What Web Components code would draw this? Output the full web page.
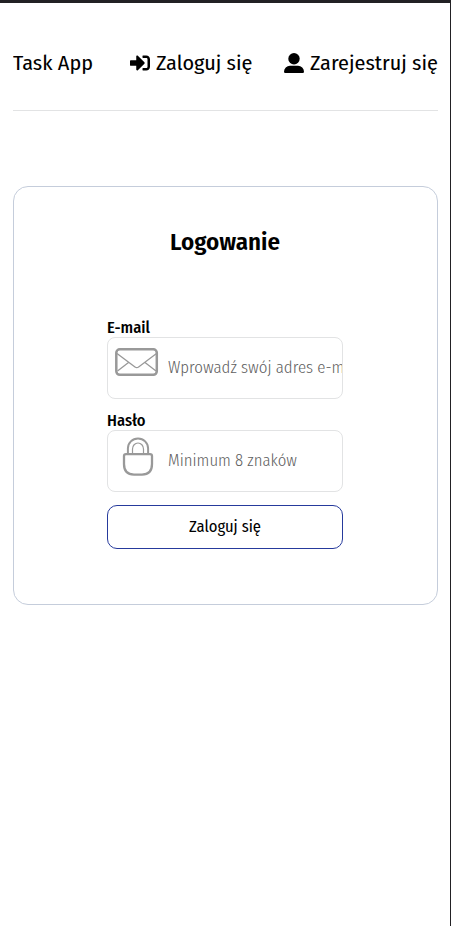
<!DOCTYPE html>
<html lang="pl">
<head>
<meta charset="utf-8">
<title>Task App</title>
<style>
html,body{height:100%}
body{margin:0;background:#fff;color:#000;font-family:"Fira Sans Condensed","Open Sans","Noto Sans",sans-serif}
</style>
</head>
<body>
<task-app></task-app>
<script>
const define = (name, html, init) => customElements.define(name, class extends HTMLElement {
  constructor(){
    super();
    this.attachShadow({mode:'open'}).innerHTML = html;
  }
  connectedCallback(){ if(init) init(this, this.shadowRoot); }
});

// Condenses a line of text to the width given in its attribute.
define('fit-text', `<style>
:host{display:block;flex:none;white-space:nowrap;text-align:left}
span{display:inline-block;transform-origin:0 50%}
</style><span><slot></slot></span>`, (el, root) => {
  const w = +el.getAttribute('width');
  el.style.width = w + 'px';
  const span = root.querySelector('span');
  span.style.transform = 'scaleX(' + w / span.getBoundingClientRect().width + ')';
});

define('nav-link', `<style>
:host{display:flex;align-items:center;gap:6px;font-size:21px;line-height:28px}
::slotted(svg){display:block;flex:none}
</style><slot name="icon"></slot><slot></slot>`);

define('nav-bar', `<style>
:host{display:flex;align-items:center;height:94px;padding-bottom:1px;box-sizing:border-box;border-bottom:1px solid #e2e3e4}
fit-text.brand{font-size:21px;line-height:28px;margin-right:auto}
nav-link+nav-link{margin-left:31.500px}
</style>
<fit-text class="brand" width="80">Task App</fit-text>
<nav-link><svg slot="icon" width="20" height="20" viewBox="0 0 512 512"><path d="M416 448h-84c-6.600 0-12-5.400-12-12v-40c0-6.600 5.400-12 12-12h84c17.700 0 32-14.300 32-32V160c0-17.700-14.300-32-32-32h-84c-6.600 0-12-5.400-12-12V76c0-6.600 5.400-12 12-12h84c53 0 96 43 96 96v192c0 53-43 96-96 96zm-47-209L201 71c-15-15-41-4.500-41 17v96H24c-13.300 0-24 10.700-24 24v96c0 13.300 10.700 24 24 24h136v96c0 21.500 26 32 41 17l168-168c9.300-9.400 9.300-24.600 0-34z"/></svg><fit-text width="96.500">Zaloguj się</fit-text></nav-link>
<nav-link><svg slot="icon" width="20" height="20" viewBox="0 0 20 20"><circle cx="10" cy="5.800" r="5.700"/><path d="M6 12.700h8a6 6 0 0 1 6 6v0a1.300 1.300 0 0 1-1.300 1.300H1.300A1.300 1.300 0 0 1 0 18.700v0a6 6 0 0 1 6-6z"/></svg><fit-text width="128">Zarejestruj się</fit-text></nav-link>`);

define('form-field', `<style>
:host{display:block;height:80px}
.label{display:block;height:18px;font-size:16px;line-height:18px;font-weight:500}
.box{display:flex;align-items:flex-start;box-sizing:border-box;height:62px;border:1px solid #e2e3e4;border-radius:8px;overflow:hidden}
.icon{flex:none;width:60px;height:60px}
.hint{padding-top:19px;font-size:16px;line-height:22px;color:#606060;font-weight:300}
</style>
<div class="label"><slot name="label"></slot></div>
<div class="box"><div class="icon"><slot name="icon"></slot></div><div class="hint"><slot></slot></div></div>`);

define('submit-button', `<style>
:host{display:block}
button{display:flex;align-items:center;justify-content:center;width:100%;height:44px;box-sizing:border-box;padding:0 0 1px;border:1px solid #263a9c;border-radius:10px;background:#fff;color:#000;font:400 16px/22px "Fira Sans Condensed","Open Sans","Noto Sans",sans-serif}
</style><button type="button"><slot></slot></button>`);

define('login-card', `<style>
:host{display:flex;flex-direction:column;align-items:center;box-sizing:border-box;height:419px;border:1px solid #c5cddb;border-radius:15px;padding:39px 1px 0 0}
h1{margin:0 0 61px;font-size:24px;line-height:32px;font-weight:600}
form{display:flex;flex-direction:column;gap:13px;width:236px}
svg{display:block}
</style>
<h1><fit-text width="110">Logowanie</fit-text></h1>
<form>
<form-field><fit-text slot="label" width="43">E-mail</fit-text>
<svg slot="icon" width="60" height="60" viewBox="0 0 60 60" fill="none" stroke="#999" stroke-linejoin="round"><rect x="8.300" y="11.300" width="40.500" height="25.500" rx="3.500" stroke-width="2.500"/><path d="M9 15.500 27 29q1.800 1.300 3.600 0L48.500 15.500M9.500 33l11-8.500M48 33l-11-8.500" stroke-width="1.300"/></svg>
<fit-text width="193">Wprowadź swój adres e-mail</fit-text></form-field>
<form-field><fit-text slot="label" width="38.500">Hasło</fit-text>
<svg slot="icon" width="60" height="60" viewBox="0 0 60 60" fill="none" stroke="#999"><path d="M19.900 23v-5.500a10.100 10.100 0 0 1 20.200 0V23" stroke-width="2"/><path d="M24.500 23v-5a5.500 6 0 0 1 11 0v5" stroke-width="1.200"/><path d="M18 23.100h24q2 0 2 2v8q0 10.600-10 10.600h-8q-10 0-10-10.600v-8q0-2 2-2z" stroke-width="2.300"/></svg>
<fit-text width="129">Minimum 8 znaków</fit-text></form-field>
<submit-button><fit-text width="72">Zaloguj się</fit-text></submit-button>
</form>`);

define('task-app', `<style>
:host{display:block;box-sizing:border-box;height:100vh;min-height:100%;border-top:3px solid #222124;border-right:1px solid #222124;padding:14px 12px 0 13px;overflow:hidden}
main{padding-top:75px}
</style><nav-bar></nav-bar><main><login-card></login-card></main>`);
</script>
</body>
</html>
